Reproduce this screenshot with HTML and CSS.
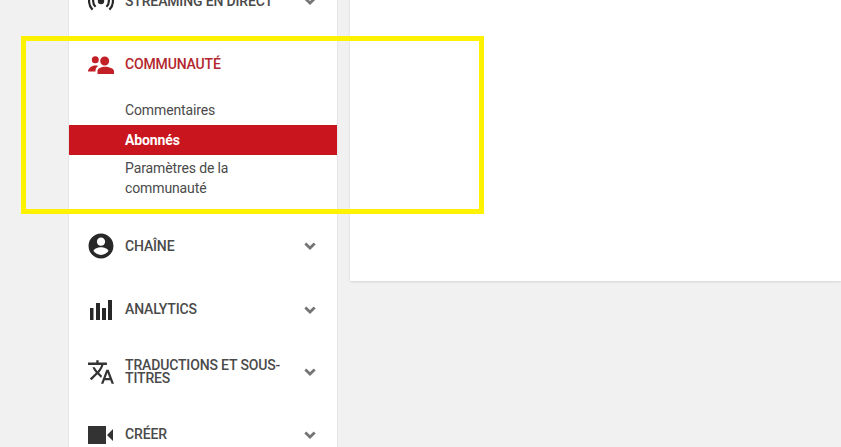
FILE: index.html
```html
<!DOCTYPE html>
<html lang="fr">
<head>
<meta charset="utf-8">
<title>Communauté</title>
<link rel="stylesheet" href="styles.css">
</head>
<body>
<div class="page">
  <nav class="sidebar">
    <div class="row">
      <svg class="icon" viewBox="0 0 26 26"><circle cx="13" cy="13" r="3.2" fill="#282828"/><path d="M7.6 7.2a8 8 0 0 0 0 11.6M18.4 7.2a8 8 0 0 1 0 11.6M4.6 4.4a12.2 12.2 0 0 0 0 17.2M21.4 4.4a12.2 12.2 0 0 1 0 17.2" fill="none" stroke="#282828" stroke-width="2.2"/></svg>
      <span class="label">Streaming en direct</span>
      <svg class="chev" viewBox="0 0 12 8"><path d="M1.3 1.500 6 6l4.700-4.500" fill="none" stroke="#757575" stroke-width="2.800"/></svg>
    </div>
    <div class="section">
      <div class="row row-active">
        <svg class="icon" viewBox="0 0 26 26"><path fill="#c21f27" d="M7.300 4.200a3.500 3.500 0 1 1 0 7 3.500 3.500 0 0 1 0-7zM16.700 4.500a4.500 4.500 0 1 1 0 9 4.500 4.500 0 0 1 0-9zM17 14.800c3.800 0 9 1.700 9 4.500V22H9.500v-2.700c0-2.800 3.700-4.500 7.500-4.500zM7.500 13.600c.9 0 1.800.1 2.600.3-1.300 1-2.400 2.600-2.600 4.100v1.600H0c0-3.300 3.800-6 7.500-6z"/></svg>
        <span class="label">Communauté</span>
      </div>
      <ul class="sub">
        <li class="sub-item">Commentaires</li>
        <li class="sub-item sub-current">Abonnés</li>
        <li class="sub-item sub-wrap">Paramètres de la communauté</li>
      </ul>
    </div>
    <div class="row row-chain">
      <svg class="icon" viewBox="0 0 24 24"><path fill="#282828" d="M12 0.500C5.650 0.500.5 5.650.5 12s5.150 11.500 11.500 11.500S23.500 18.350 23.500 12 18.350.5 12 .5zm0 3.700c2.100 0 3.800 1.700 3.800 3.800s-1.700 3.800-3.800 3.800-3.800-1.700-3.800-3.800 1.700-3.800 3.800-3.800zm0 16.100c-2.900 0-5.400-1.400-6.900-3.600.1-2.300 4.600-3.500 6.900-3.500s6.800 1.200 6.900 3.500c-1.500 2.200-4 3.600-6.900 3.600z"/></svg>
      <span class="label">Chaîne</span>
      <svg class="chev" viewBox="0 0 12 8"><path d="M1.300 1.500 6 6l4.700-4.500" fill="none" stroke="#757575" stroke-width="2.800"/></svg>
    </div>
    <div class="row">
      <svg class="icon" viewBox="0 0 26 26"><path fill="#282828" d="M2 11h3.500v12H2zM8 6h4v17H8zM14 11h4v12h-4zM20 3h4v20h-4z"/></svg>
      <span class="label">Analytics</span>
      <svg class="chev" viewBox="0 0 12 8"><path d="M1.300 1.500 6 6l4.700-4.500" fill="none" stroke="#757575" stroke-width="2.800"/></svg>
    </div>
    <div class="row">
      <svg class="icon" viewBox="1 1 22 22"><path fill="#333" d="M12.870 15.070l-2.540-2.510.03-.03c1.740-1.940 2.980-4.170 3.710-6.530H17V4h-7V2H8v2H1v1.990h11.170C11.500 7.920 10.440 9.750 9 11.350 8.070 10.320 7.300 9.190 6.690 8h-2c.73 1.630 1.730 3.170 2.980 4.560l-5.090 5.020L4 19l5-5 3.110 3.110.76-2.040zM18.500 10h-2L12 22h2l1.120-3h4.750L21 22h2l-4.500-12zm-2.620 7l1.620-4.330L19.120 17h-3.240z"/></svg>
      <span class="label">Traductions et sous-titres</span>
      <svg class="chev" viewBox="0 0 12 8"><path d="M1.300 1.500 6 6l4.700-4.500" fill="none" stroke="#757575" stroke-width="2.800"/></svg>
    </div>
    <div class="row">
      <svg class="icon" viewBox="0 0 26 26"><path fill="#333" d="M0 4h18v18H0zM19 13 25 7v12z"/></svg>
      <span class="label">Créer</span>
      <svg class="chev" viewBox="0 0 12 8"><path d="M1.300 1.500 6 6l4.700-4.500" fill="none" stroke="#757575" stroke-width="2.800"/></svg>
    </div>
  </nav>
  <main class="panel"></main>
</div>
<div class="highlight"></div>
</body>
</html>
```
FILE: styles.css
```css
html, body {
  margin: 0;
  padding: 0;
  height: 447px;
  overflow: hidden;
  background: #f1f1f1;
}
body {
  position: relative;
  font-family: Roboto, "Liberation Sans", sans-serif;
  color: #3d3d3d;
}
.page {
  display: flex;
  align-items: flex-start;
  gap: 13px;
  margin-top: -30px;
  padding-left: 69px;
}
.sidebar {
  flex: 0 0 268px;
  background: #fff;
  box-shadow: 0 0 1px rgba(0, 0, 0, 0.25);
  padding-bottom: 60px;
}
.panel {
  flex: 1;
  height: 311px;
  background: #fff;
  box-shadow: 0 1px 2px rgba(0, 0, 0, 0.12);
}
.row {
  display: flex;
  align-items: center;
  height: 62.5px;
  padding: 0 21px 0 19px;
  box-sizing: border-box;
}
.row-chain {
  margin-bottom: 1px;
}
.icon {
  flex: 0 0 26px;
  width: 26px;
  height: 26px;
  margin-right: 11px;
}
.label {
  flex: 1;
  font-size: 14px;
  font-weight: 500;
  letter-spacing: -0.15px;
  line-height: 13px;
  text-transform: uppercase;
  color: #4a4a4a;
}
.chev {
  flex: 0 0 12px;
  width: 12px;
  height: 8px;
}
.row-active {
  padding-top: 2px;
}
.row-active .label {
  color: #b3262c;
}
.sub {
  list-style: none;
  margin: 0;
  padding: 0 0 17px;
}
.sub-item {
  height: 30px;
  line-height: 30px;
  padding: 0 90px 0 56px;
  font-size: 14px;
  letter-spacing: -0.12px;
  color: #4a4a4a;
}
.sub-current {
  background: #c9151d;
  color: #fff;
  font-weight: 700;
}
.sub-wrap {
  height: auto;
  line-height: 20px;
  padding-top: 3px;
  padding-bottom: 0;
}
.highlight {
  position: absolute;
  left: 21px;
  top: 36px;
  width: 453px;
  height: 168px;
  border: 5px solid #fff200;
}
```
